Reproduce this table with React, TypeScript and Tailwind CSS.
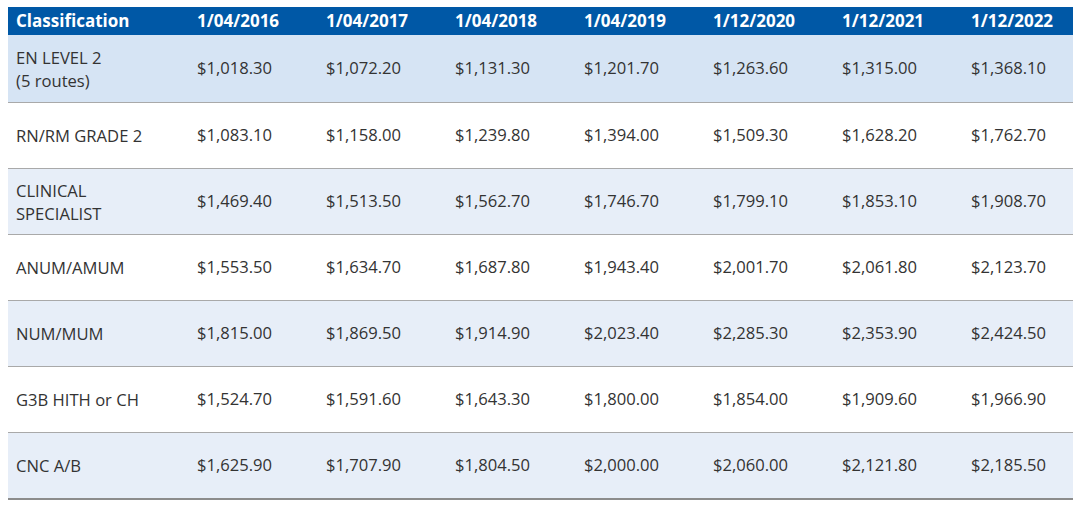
import React from "react";

const dates = ["1/04/2016", "1/04/2017", "1/04/2018", "1/04/2019", "1/12/2020", "1/12/2021", "1/12/2022"];

type Row = { name: string[]; values: string[]; bg: string };

const rows: Row[] = [
  { name: ["EN LEVEL 2", "(5 routes)"], values: ["$1,018.30", "$1,072.20", "$1,131.30", "$1,201.70", "$1,263.60", "$1,315.00", "$1,368.10"], bg: "bg-[#d6e4f4]" },
  { name: ["RN/RM GRADE 2"], values: ["$1,083.10", "$1,158.00", "$1,239.80", "$1,394.00", "$1,509.30", "$1,628.20", "$1,762.70"], bg: "bg-white" },
  { name: ["CLINICAL", "SPECIALIST"], values: ["$1,469.40", "$1,513.50", "$1,562.70", "$1,746.70", "$1,799.10", "$1,853.10", "$1,908.70"], bg: "bg-[#e7eef8]" },
  { name: ["ANUM/AMUM"], values: ["$1,553.50", "$1,634.70", "$1,687.80", "$1,943.40", "$2,001.70", "$2,061.80", "$2,123.70"], bg: "bg-white" },
  { name: ["NUM/MUM"], values: ["$1,815.00", "$1,869.50", "$1,914.90", "$2,023.40", "$2,285.30", "$2,353.90", "$2,424.50"], bg: "bg-[#e7eef8]" },
  { name: ["G3B HITH or CH"], values: ["$1,524.70", "$1,591.60", "$1,643.30", "$1,800.00", "$1,854.00", "$1,909.60", "$1,966.90"], bg: "bg-white" },
  { name: ["CNC A/B"], values: ["$1,625.90", "$1,707.90", "$1,804.50", "$2,000.00", "$2,060.00", "$2,121.80", "$2,185.50"], bg: "bg-[#e7eef8]" },
];

const cols = "grid grid-cols-[180px_repeat(6,129px)_111px]";

export default function App() {
  return (
    <div className="w-[1080px] h-[506px] bg-white pt-[7px] pl-2 font-['Open_Sans',sans-serif]">
      <div className="w-[1065px]">
        {/* header */}
        <div className={`${cols} h-[28px] bg-[#0058a6] text-white font-bold text-[17px] items-center`}>
          <div className="pl-2">Classification</div>
          {dates.map((d) => (
            <div key={d} className="pl-[9px]">{d}</div>
          ))}
        </div>

        {rows.map((r, i) => (
          <div
            key={r.name.join(" ")}
            className={`${cols} ${r.bg} items-center text-[16.6px] text-[#333333] ${
              i === 0 ? "h-[68px]" : i === rows.length - 1 ? "h-[67px]" : "h-[66px]"
            } ${i === rows.length - 1 ? "border-b-2 border-[#8c8c8c]" : "border-b border-[#a9a9a9]"}`}
          >
            <div className="pl-2 leading-[23px]">
              {r.name.map((n) => (
                <div key={n}>{n}</div>
              ))}
            </div>
            {r.values.map((v, j) => (
              <div key={j} className="pl-[9px]">{v}</div>
            ))}
          </div>
        ))}
      </div>
    </div>
  );
}
